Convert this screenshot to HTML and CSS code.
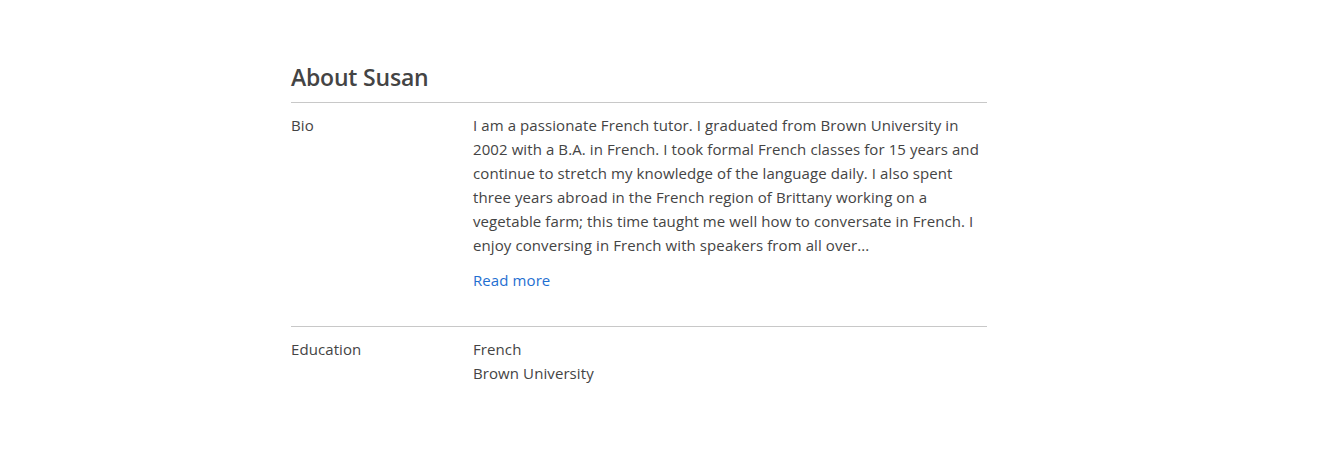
FILE: index.html
```html
<!DOCTYPE html>
<html lang="en">
<head>
<meta charset="utf-8">
<title>About Susan</title>
<link rel="stylesheet" href="styles.css">
</head>
<body>
<main class="page">
  <section class="about">
    <h2 class="about-title">About Susan</h2>
    <div class="row row-bio">
      <div class="row-label">Bio</div>
      <div class="row-value">
        <p class="bio-text">I am a passionate French tutor. I graduated from Brown University in 2002 with a B.A. in French. I took formal French classes for 15 years and continue to stretch my knowledge of the language daily. I also spent three years abroad in the French region of Brittany working on a vegetable farm; this time taught me well how to conversate in French. I enjoy conversing in French with speakers from all over...</p>
        <a class="read-more" href="#">Read more</a>
      </div>
    </div>
    <div class="row row-edu">
      <div class="row-label">Education</div>
      <div class="row-value">
        <div>French</div>
        <div>Brown University</div>
      </div>
    </div>
  </section>
</main>
</body>
</html>
```
FILE: styles.css
```css
html, body {
  margin: 0;
  padding: 0;
  background: #fff;
}
body {
  font-family: "Open Sans", "Liberation Sans", sans-serif;
  font-size: 15px;
  line-height: 24px;
  letter-spacing: 0.09px;
  color: #444;
}
.page {
  padding: 60px 0 0 291px;
}
.about {
  width: 696px;
}
.about-title {
  margin: 0;
  font-size: 23px;
  font-weight: 600;
  line-height: 34px;
  color: #444;
  padding-bottom: 8px;
  border-bottom: 1px solid #c8c8c8;
  letter-spacing: -0.2px;
}
.row {
  display: grid;
  grid-template-columns: 182px 1fr;
}
.row-bio {
  padding: 10px 0 34px;
  border-bottom: 1px solid #c8c8c8;
}
.row-edu {
  padding: 10px 0 0;
}
.bio-text {
  margin: 0 0 11px;
}
.read-more {
  color: #1f6fd1;
  text-decoration: none;
}
```
